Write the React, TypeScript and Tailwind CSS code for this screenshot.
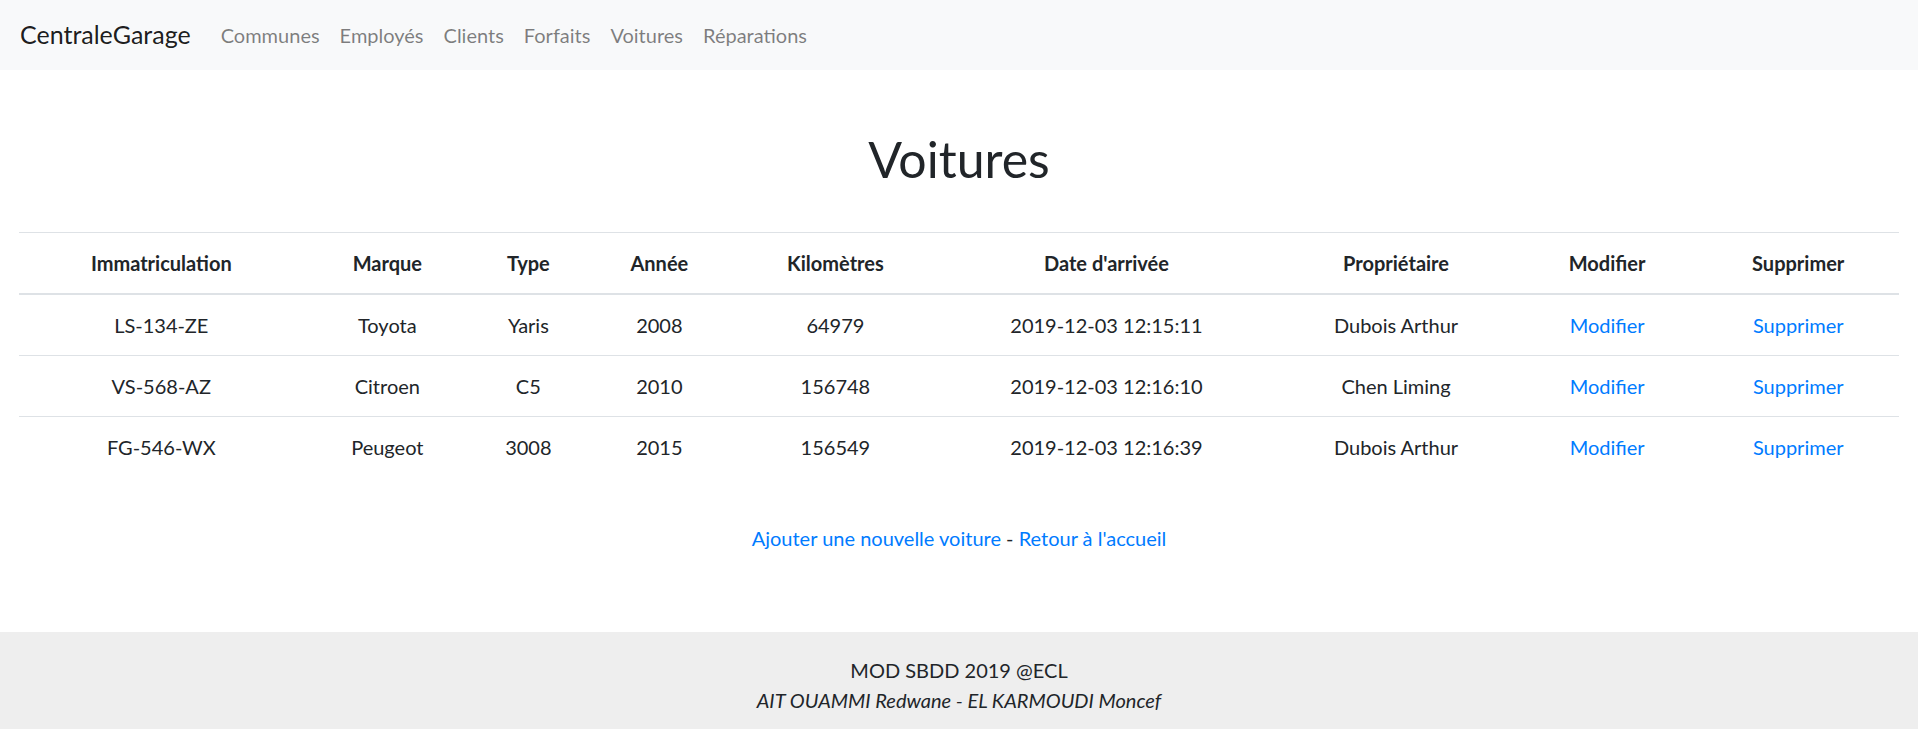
import { useState } from "react";

// data of the cars table
const voitures = [
  {
    immat: "LS-134-ZE",
    marque: "Toyota",
    type: "Yaris",
    annee: "2008",
    km: "64979",
    date: "2019-12-03 12:15:11",
    proprio: "Dubois Arthur",
  },
  {
    immat: "VS-568-AZ",
    marque: "Citroen",
    type: "C5",
    annee: "2010",
    km: "156748",
    date: "2019-12-03 12:16:10",
    proprio: "Chen Liming",
  },
  {
    immat: "FG-546-WX",
    marque: "Peugeot",
    type: "3008",
    annee: "2015",
    km: "156549",
    date: "2019-12-03 12:16:39",
    proprio: "Dubois Arthur",
  },
];

const navLinks = ["Communes", "Employés", "Clients", "Forfaits", "Voitures", "Réparations"];

const headers = [
  { label: "Immatriculation", w: "w-[285px]" },
  { label: "Marque", w: "w-[167px]" },
  { label: "Type", w: "w-[115px]" },
  { label: "Année", w: "w-[147px]" },
  { label: "Kilomètres", w: "w-[205px]" },
  { label: "Date d'arrivée", w: "w-[337px]" },
  { label: "Propriétaire", w: "w-[242px]" },
  { label: "Modifier", w: "w-[180px]" },
  { label: "Supprimer", w: "w-[202px]" },
];

function Navbar() {
  // @ts-ignore
  const [active, setActive] = useState<string>("Voitures");

  return (
    <nav className="bg-[#f8f9fa] flex items-center px-[20px] py-[10px] h-[70px]">
      <a href="#" className="text-[25px] leading-[37.5px] py-[6px] mr-[20px] text-black/90">
        CentraleGarage
      </a>
      <ul className="flex">
        {navLinks.map((l) => (
          <li key={l}>
            <a
              href="#"
              onClick={() => setActive(l)}
              className="block px-[10px] py-[10px] text-[20px] leading-[30px] text-black/50"
            >
              {l}
            </a>
          </li>
        ))}
      </ul>
    </nav>
  );
}

function App() {
  return (
    <div
      className="min-h-screen flex flex-col bg-white text-[#212529] text-[20px] leading-[30px]"
      style={{ fontFamily: '"Segoe UI", Lato, "Noto Sans", sans-serif' }}
    >
      <Navbar />

      <div className="px-[18.75px]">
        {/* title */}
        <h1 className="text-center text-[50px] leading-[60px] font-normal mt-[59px] mb-[43px]">
          Voitures
        </h1>

        {/* cars table */}
        <table className="w-full table-fixed border-collapse text-center">
          <colgroup>
            {headers.map((h) => (
              <col key={h.label} className={h.w} />
            ))}
          </colgroup>
          <thead>
            <tr>
              {headers.map((h) => (
                <th
                  key={h.label}
                  className="p-[15px] font-bold border-t border-b-2 border-[#dee2e6]"
                >
                  {h.label}
                </th>
              ))}
            </tr>
          </thead>
          <tbody>
            {voitures.map((v) => (
              <tr key={v.immat}>
                <td className="p-[15px] border-t border-[#dee2e6]">{v.immat}</td>
                <td className="p-[15px] border-t border-[#dee2e6]">{v.marque}</td>
                <td className="p-[15px] border-t border-[#dee2e6]">{v.type}</td>
                <td className="p-[15px] border-t border-[#dee2e6]">{v.annee}</td>
                <td className="p-[15px] border-t border-[#dee2e6]">{v.km}</td>
                <td className="p-[15px] border-t border-[#dee2e6]">{v.date}</td>
                <td className="p-[15px] border-t border-[#dee2e6]">{v.proprio}</td>
                <td className="p-[15px] border-t border-[#dee2e6]">
                  <a href="#" className="text-[#007bff]">
                    Modifier
                  </a>
                </td>
                <td className="p-[15px] border-t border-[#dee2e6]">
                  <a href="#" className="text-[#007bff]">
                    Supprimer
                  </a>
                </td>
              </tr>
            ))}
          </tbody>
        </table>

        {/* links */}
        <p className="text-center mt-[46px] mb-[79px]">
          <a href="#" className="text-[#007bff]">
            Ajouter une nouvelle voiture
          </a>{" "}
          - {" "}
          <a href="#" className="text-[#007bff]">
            Retour à l'accueil
          </a>
        </p>
      </div>

      {/* footer */}
      <footer className="bg-[#eeeeee] text-center pt-[23px] pb-[20px] flex-1">
        <div>MOD SBDD 2019 @ECL</div>
        <div className="italic">AIT OUAMMI Redwane - EL KARMOUDI Moncef</div>
      </footer>
    </div>
  );
}

export default App;
